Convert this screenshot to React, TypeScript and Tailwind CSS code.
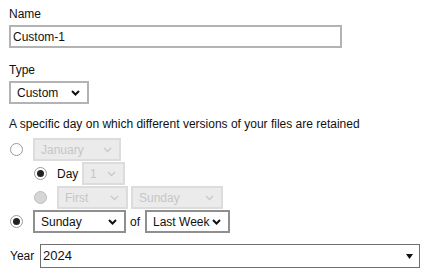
import React from "react";

function Chevron({ disabled }: { disabled?: boolean }) {
  return (
    <svg width="9" height="6" viewBox="0 0 9 6" className="shrink-0">
      <polyline
        points="1,1 4.5,4.5 8,1"
        fill="none"
        stroke={disabled ? "#c9c9c9" : "#111"}
        strokeWidth={disabled ? 1.3 : 2}
      />
    </svg>
  );
}

function Sel({
  label,
  w,
  disabled,
  dark,
}: {
  label: string;
  w: string;
  disabled?: boolean;
  dark?: boolean;
}) {
  const cls = disabled
    ? "border-[#dcdcdc] bg-[#ebebeb] text-[#c6c6c6]"
    : dark
    ? "border-[#8f8f8f] bg-white text-[#111]"
    : "border-[#b3b3b3] bg-white text-[#111]";
  return (
    <div
      className={`flex h-[23px] items-center justify-between border-2 pl-[6px] pr-[7px] ${w} ${cls}`}
    >
      <span className="leading-none">{label}</span>
      <Chevron disabled={disabled} />
    </div>
  );
}

function Radio({ checked, disabled }: { checked?: boolean; disabled?: boolean }) {
  return (
    <div
      className={`flex h-[13px] w-[13px] shrink-0 items-center justify-center rounded-full border ${
        disabled ? "border-[#bdbdbd] bg-[#d6d6d6]" : "border-[#9a9a9a] bg-white"
      }`}
    >
      {checked && <div className="h-[7px] w-[7px] rounded-full bg-[#222]" />}
    </div>
  );
}

export default function App() {
  return (
    <div
      className="h-[275px] w-[430px] bg-white pl-[9px] pt-[7px] text-[12px] text-[#111]"
      style={{ fontFamily: '"Liberation Sans", Arial, sans-serif' }}
    >
      <div className="leading-[14px]">Name</div>
      <div className="mt-[4px] flex h-[23px] w-[333px] items-center border-2 border-[#b3b3b3] pl-[2px]">
        Custom-1
      </div>
      <div className="mt-[15px] leading-[14px]">Type</div>
      <div className="mt-[4px]">
        <Sel label="Custom" w="w-[80px]" />
      </div>
      <div className="mt-[13px] leading-[14px]">
        A specific day on which different versions of your files are retained
      </div>
      <div className="mt-[7px] flex flex-col gap-[1px]">
        <div className="flex h-[23px] items-center">
          <div className="ml-[1px] mr-[10px]">
            <Radio />
          </div>
          <Sel label="January" w="w-[88px]" disabled />
        </div>
        <div className="flex h-[23px] items-center">
          <div className="ml-[25px] mr-[10px]">
            <Radio checked />
          </div>
          <span className="mr-[4px] w-[21px]">Day</span>
          <Sel label="1" w="w-[43px]" disabled />
        </div>
        <div className="flex h-[23px] items-center">
          <div className="ml-[25px] mr-[10px]">
            <Radio disabled />
          </div>
          <Sel label="First" w="w-[71px]" disabled />
          <div className="ml-[3px]">
            <Sel label="Sunday" w="w-[92px]" disabled />
          </div>
        </div>
        <div className="flex h-[23px] items-center">
          <div className="ml-[1px] mr-[10px]">
            <Radio checked />
          </div>
          <Sel label="Sunday" w="w-[93px]" dark />
          <span className="ml-[4px] mr-[4px] w-[11px]">of</span>
          <Sel label="Last Week" w="w-[85px]" dark />
        </div>
      </div>
      <div className="mt-[11px] flex items-center">
        <span className="ml-[1px] w-[30px]">Year</span>
        <div className="flex h-[24px] w-[380px] items-center justify-between border border-[#6f6f6f] pl-[2px] pr-[6px] text-[13px]">
          <span>2024</span>
          <svg width="7" height="5" viewBox="0 0 7 5">
            <polygon points="0,0 7,0 3.5,5" fill="#111" />
          </svg>
        </div>
      </div>
    </div>
  );
}
